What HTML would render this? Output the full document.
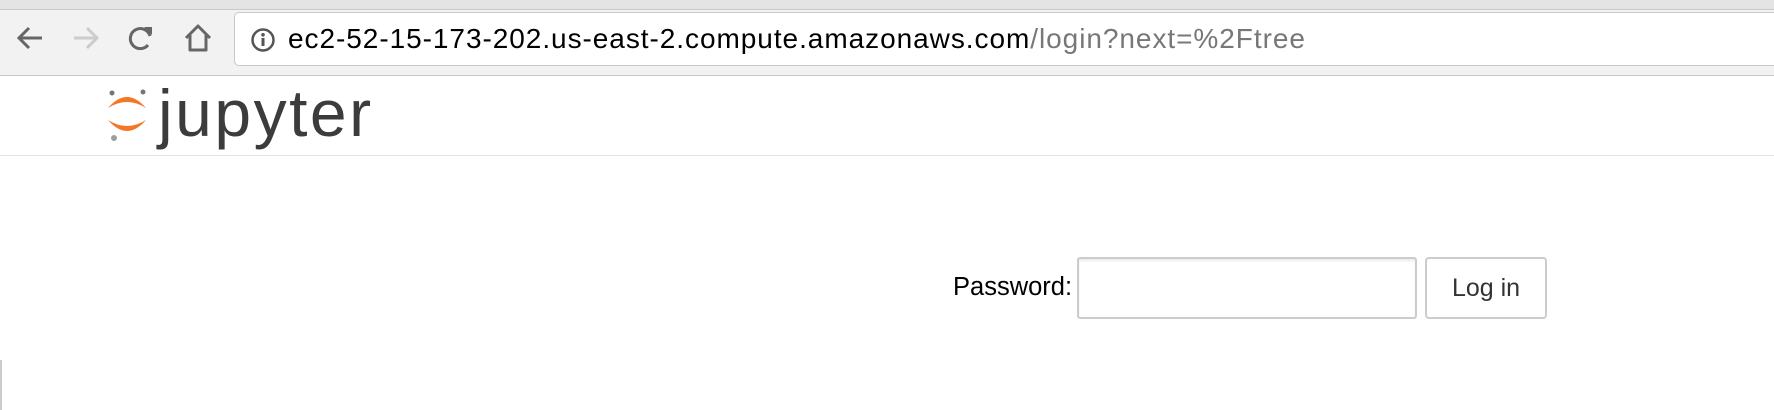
<!DOCTYPE html>
<html><head><meta charset="utf-8"><style>
*{margin:0;padding:0;box-sizing:border-box}
body{width:1774px;height:410px;overflow:hidden;background:#fff;font-family:"Liberation Sans",Arial,sans-serif;position:relative}
.tabs{position:absolute;left:0;top:0;width:1774px;height:10px;background:#e4e4e4;border-bottom:1px solid #c8c8c8}
.bar{position:absolute;left:0;top:10px;width:1774px;height:66px;background:#f2f2f2;border-bottom:1px solid #c9c9c9}
.url{position:absolute;left:234px;top:12px;width:1560px;height:54px;background:#fff;border:1px solid #c8c8c8;border-radius:5px}
.urltext{position:absolute;left:288px;top:23px;font-size:28px;color:#000;white-space:nowrap;letter-spacing:0.95px}
.urltext span{color:#777}
.ic{position:absolute;top:22px}
.hdr{position:absolute;left:0;top:155px;width:1774px;height:1px;background:#e2e2e2}
.jt{position:absolute;left:158px;top:75px;font-size:66px;color:#3c3c3c;letter-spacing:2.5px}
.lbl{position:absolute;left:953px;top:273px;font-size:25.5px;color:#000}
.inp{position:absolute;left:1077px;top:257px;width:340px;height:62px;border:2px solid #ccc;border-radius:3px;box-shadow:inset 0 2px 2px rgba(0,0,0,.08)}
.btn{position:absolute;left:1425px;top:257px;width:122px;height:62px;border:2px solid #ccc;border-radius:4px;font-size:25px;color:#333;text-align:center;line-height:58px}
</style></head><body>
<div class="tabs"></div>
<div class="bar">
<svg class="ic" style="left:14px;top:12px" width="32" height="32" viewBox="0 0 32 32"><path d="M28 16H5M15 6L5 16l10 10" stroke="#666" stroke-width="3" fill="none"/></svg>
<svg class="ic" style="left:70px;top:12px" width="32" height="32" viewBox="0 0 32 32"><path d="M4 16h23M17 6l10 10-10 10" stroke="#ccc" stroke-width="3" fill="none"/></svg>
<svg class="ic" style="left:125px;top:12px" width="32" height="32" viewBox="0 0 32 32"><path d="M25 14A10 10 0 1 0 23 23" stroke="#666" stroke-width="3" fill="none"/><path d="M19 5h8v8z" fill="#666"/></svg>
<svg class="ic" style="left:181px;top:11px" width="34" height="34" viewBox="0 0 34 34"><path d="M5 17L17 5l12 12M9 14v15h16V14" stroke="#666" stroke-width="3" fill="none" stroke-linejoin="round"/></svg>
</div>
<div class="url"></div>
<svg style="position:absolute;left:250px;top:27px" width="26" height="26" viewBox="0 0 26 26"><circle cx="13" cy="13" r="10.5" stroke="#555" stroke-width="2.5" fill="none"/><rect x="11.5" y="11" width="3" height="8" fill="#555"/><circle cx="13" cy="7.8" r="1.8" fill="#555"/></svg>
<div class="urltext">ec2-52-15-173-202.us-east-2.compute.amazonaws.com<span>/login?next=%2Ftree</span></div>
<svg style="position:absolute;left:105px;top:88px" width="44" height="56" viewBox="0 0 44 56"><path d="M3 20Q22 -2 41 20Q22 8 3 20z" fill="#f37726"/><path d="M3 32Q22 54 41 32Q22 44 3 32z" fill="#f37726"/><circle cx="7" cy="5" r="2.5" fill="#767677"/><circle cx="38" cy="4" r="2.5" fill="#767677"/><circle cx="9" cy="50" r="3" fill="#9e9e9e"/></svg>
<div class="jt">jupyter</div>
<div class="hdr"></div>
<div class="lbl">Password:</div>
<div class="inp"></div>
<div class="btn">Log in</div>
<div style="position:absolute;left:0;top:360px;width:2px;height:50px;background:#ccc"></div>
</body></html>
